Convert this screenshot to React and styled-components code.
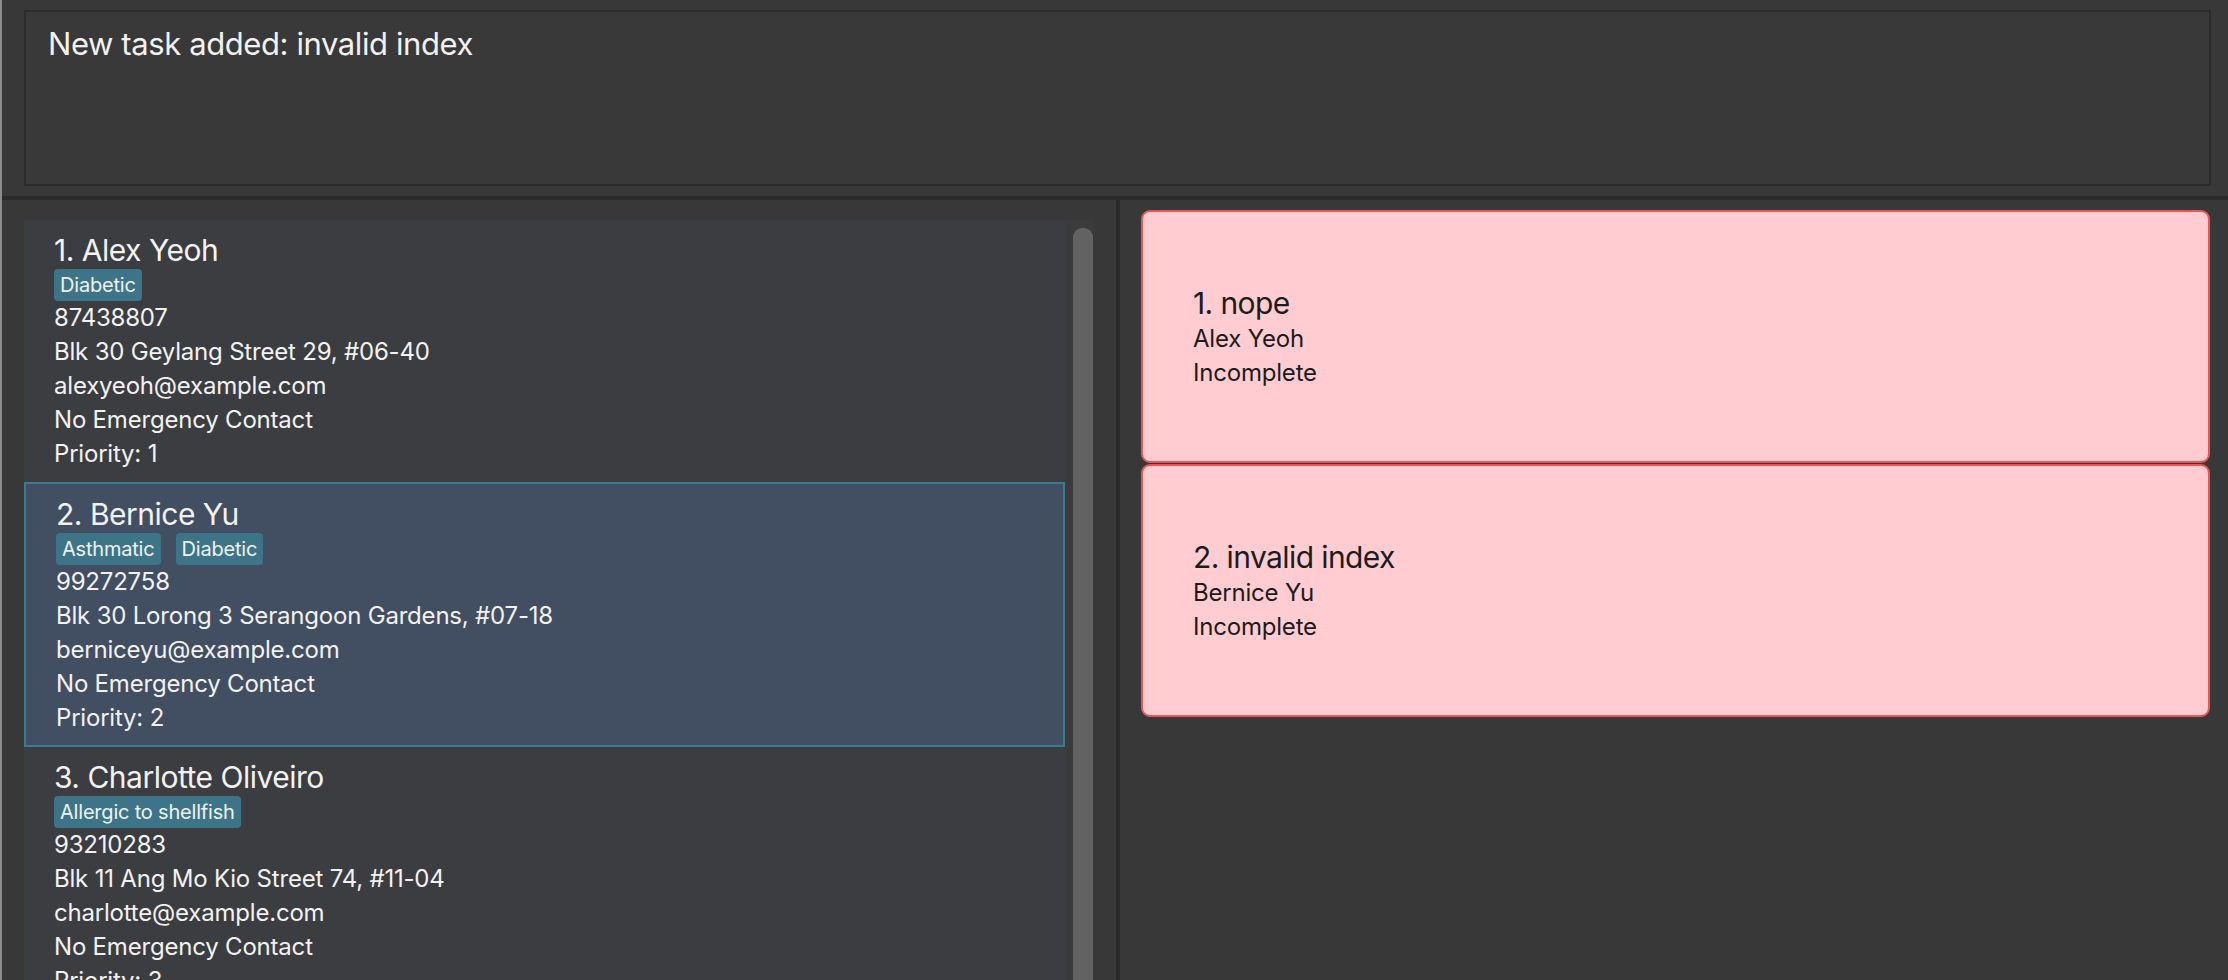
import React from 'react'
import styled, { createGlobalStyle } from 'styled-components';

const GlobalStyle = createGlobalStyle`
    html, body {
        margin: 0;
        padding: 0;
        background: #383838;
        overflow: hidden;
    }
    * {
        box-sizing: border-box;
    }
`

const persons = [
    {
        name: 'Alex Yeoh',
        tags: ['Diabetic'],
        phone: '87438807',
        address: 'Blk 30 Geylang Street 29, #06-40',
        email: 'alexyeoh@example.com',
        priority: 1,
    },
    {
        name: 'Bernice Yu',
        tags: ['Asthmatic', 'Diabetic'],
        phone: '99272758',
        address: 'Blk 30 Lorong 3 Serangoon Gardens, #07-18',
        email: 'berniceyu@example.com',
        priority: 2,
    },
    {
        name: 'Charlotte Oliveiro',
        tags: ['Allergic to shellfish'],
        phone: '93210283',
        address: 'Blk 11 Ang Mo Kio Street 74, #11-04',
        email: 'charlotte@example.com',
        priority: 3,
    },
];

const tasks = [
    { title: 'nope', person: 'Alex Yeoh', status: 'Incomplete' },
    { title: 'invalid index', person: 'Bernice Yu', status: 'Incomplete' },
];

const PersonCard = ({ index, person, selected }) => (
    <PersonCell selected={selected}>
        <PersonName>{index}. {person.name}</PersonName>
        <TagRow>
            {person.tags.map(tag => <Tag key={tag}>{tag}</Tag>)}
        </TagRow>
        <Detail>{person.phone}</Detail>
        <Detail>{person.address}</Detail>
        <Detail>{person.email}</Detail>
        <Detail>No Emergency Contact</Detail>
        <Detail>Priority: {person.priority}</Detail>
    </PersonCell>
)

const TaskCard = ({ index, task }) => (
    <TaskCell>
        <TaskTitle>{index}. {task.title}</TaskTitle>
        <TaskDetail>{task.person}</TaskDetail>
        <TaskDetail>{task.status}</TaskDetail>
    </TaskCell>
)

const App = () => {
    return (
        <>
            <GlobalStyle />
            <Window>
                <ResultArea>
                    <ResultBox>New task added: invalid index</ResultBox>
                </ResultArea>
                <Panels>
                    <PersonPanel>
                        <PersonList>
                            <Cells>
                                {persons.map((p, i) => (
                                    <PersonCard key={p.name} index={i + 1} person={p} selected={i === 1} />
                                ))}
                            </Cells>
                            <ScrollTrack>
                                <ScrollThumb />
                            </ScrollTrack>
                        </PersonList>
                    </PersonPanel>
                    <TaskPanel>
                        {tasks.map((t, i) => (
                            <TaskCard key={t.title} index={i + 1} task={t} />
                        ))}
                    </TaskPanel>
                </Panels>
            </Window>
        </>
    )
}

export default App;

const Window = styled.div`
    height: 980px;
    display: flex;
    flex-direction: column;
    border-left: 2px solid #8c8c8c;
    font-family: Inter, "Noto Sans", sans-serif;
    color: #f2f2f2;
    overflow: hidden;
`

const ResultArea = styled.div`
    height: 200px;
    padding: 10px 17px 10px 22px;
    border-bottom: 4px solid #2b2b2b;
    flex-shrink: 0;
`

const ResultBox = styled.div`
    height: 176px;
    border: 2px solid #2b2b2b;
    background: #393939;
    padding: 12px 22px;
    font-size: 31px;
    letter-spacing: -0.4px;
    line-height: 40px;
`

const Panels = styled.div`
    flex: 1;
    display: flex;
    min-height: 0;
`

// left side, the list of patients
const PersonPanel = styled.div`
    width: 1118px;
    padding: 20px 23px 0 22px;
    border-right: 4px solid #2b2b2b;
    flex-shrink: 0;
`

const PersonList = styled.div`
    display: flex;
    height: 100%;
    background: #3b3b3b;
`

const Cells = styled.div`
    width: 1041px;
    background: #3c3d40;
`

// selected cell gets a border, so text sits a little further in
const PersonCell = styled.div`
    padding: ${p => p.selected ? '12px 30px 10px 30px' : '12px 30px 11px 30px'};
    background: ${p => p.selected ? '#424e61' : 'transparent'};
    border: ${p => p.selected ? '2px solid #3b7b91' : 'none'};
`

const PersonName = styled.div`
    font-size: 30px;
    line-height: 36px;
    letter-spacing: -0.5px;
`

const TagRow = styled.div`
    display: flex;
    gap: 15px;
    margin: 1px 0 0 0;
`

const Tag = styled.span`
    height: 32px;
    padding: 0 6px;
    background: #3d7488;
    border-radius: 4px;
    font-size: 20px;
    line-height: 32px;
    letter-spacing: -0.2px;
    color: #eef3f5;
`

const Detail = styled.div`
    font-size: 24px;
    line-height: 34px;
    letter-spacing: -0.2px;
`

const ScrollTrack = styled.div`
    width: 28px;
    padding: 8px 0 0 8px;
`

const ScrollThumb = styled.div`
    width: 20px;
    height: 100%;
    background: #626262;
    border-radius: 9px 9px 0 0;
`

// right side, the task cards
const TaskPanel = styled.div`
    flex: 1;
    padding: 10px 18px 0 21px;
    display: flex;
    flex-direction: column;
    gap: 1px;
`

const TaskCell = styled.div`
    height: 253px;
    flex-shrink: 0;
    display: flex;
    flex-direction: column;
    justify-content: center;
    padding: 0 50px;
    background: #ffccd1;
    border: 2px solid #ea5656;
    border-radius: 9px;
    color: #1c1c1c;
`

const TaskTitle = styled.div`
    font-size: 30px;
    line-height: 38px;
    letter-spacing: -0.6px;
`

const TaskDetail = styled.div`
    font-size: 24px;
    line-height: 34px;
    letter-spacing: -0.2px;
`
